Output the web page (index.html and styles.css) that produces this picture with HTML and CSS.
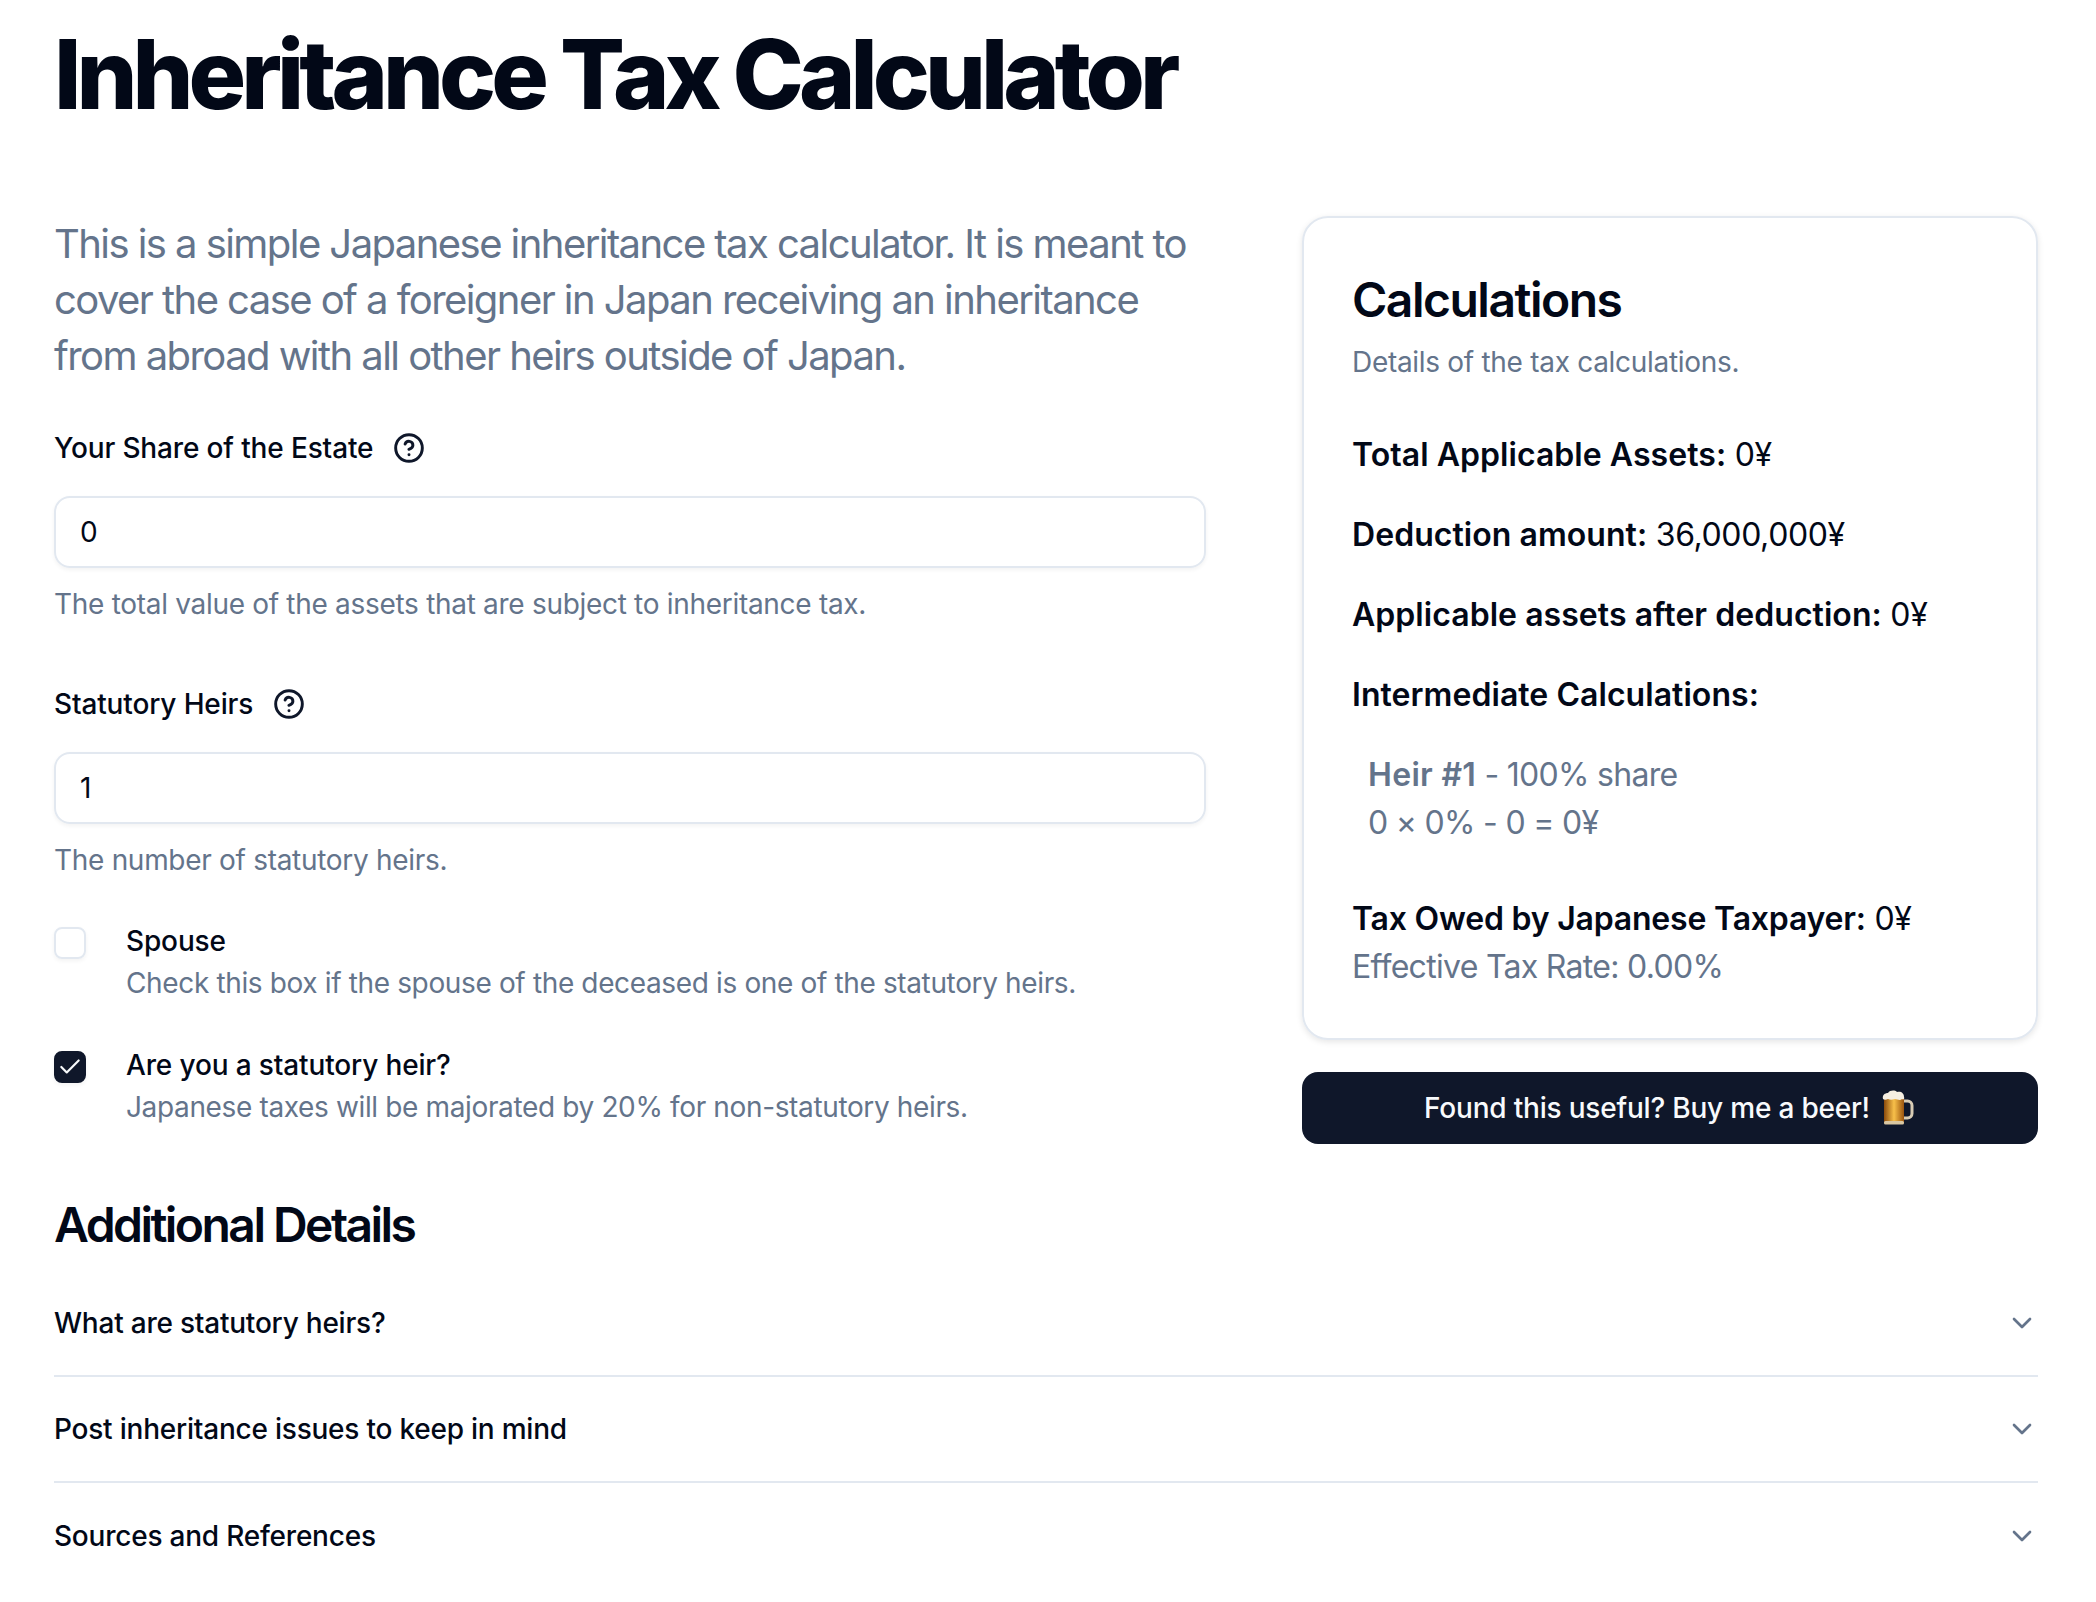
FILE: index.html
```html
<!DOCTYPE html>
<html lang="en">
<head>
<meta charset="utf-8">
<title>Inheritance Tax Calculator</title>
<link rel="stylesheet" href="styles.css">
</head>
<body>
<main class="page">
  <h1 class="title">Inheritance Tax Calculator</h1>
  <div class="columns">
    <section class="form">
      <p class="intro">This is a simple Japanese inheritance tax calculator. It is meant to cover the case of a foreigner in Japan receiving an inheritance from abroad with all other heirs outside of Japan.</p>
      <div class="field">
        <div class="label-row">
          <label class="label">Your Share of the Estate</label>
          <svg class="help" viewBox="0 0 24 24" fill="none" stroke="currentColor" stroke-width="2.2" stroke-linecap="round" stroke-linejoin="round"><circle cx="12" cy="12" r="10"/><path d="M9.09 9a3 3 0 0 1 5.83 1c0 2-3 3-3 3"/><path d="M12 17h.01"/></svg>
        </div>
        <div class="input">0</div>
        <p class="hint">The total value of the assets that are subject to inheritance tax.</p>
      </div>
      <div class="field">
        <div class="label-row">
          <label class="label">Statutory Heirs</label>
          <svg class="help" viewBox="0 0 24 24" fill="none" stroke="currentColor" stroke-width="2.2" stroke-linecap="round" stroke-linejoin="round"><circle cx="12" cy="12" r="10"/><path d="M9.09 9a3 3 0 0 1 5.83 1c0 2-3 3-3 3"/><path d="M12 17h.01"/></svg>
        </div>
        <div class="input">1</div>
        <p class="hint">The number of statutory heirs.</p>
      </div>
      <div class="check-row check-first">
        <span class="box"></span>
        <div>
          <div class="label">Spouse</div>
          <p class="hint check-hint">Check this box if the spouse of the deceased is one of the statutory heirs.</p>
        </div>
      </div>
      <div class="check-row">
        <span class="box box-on">
          <svg viewBox="0 0 24 24" fill="none" stroke="#f8fafc" stroke-width="2" stroke-linecap="round" stroke-linejoin="round"><path d="M20 6 9 17l-5-5"/></svg>
        </span>
        <div>
          <div class="label">Are you a statutory heir?</div>
          <p class="hint check-hint">Japanese taxes will be majorated by 20% for non-statutory heirs.</p>
        </div>
      </div>
    </section>
    <aside class="side">
      <div class="card">
        <h2 class="card-title">Calculations</h2>
        <p class="hint card-sub">Details of the tax calculations.</p>
        <p class="line"><b>Total Applicable Assets:</b> 0¥</p>
        <p class="line"><b>Deduction amount:</b> 36,000,000¥</p>
        <p class="line"><b>Applicable assets after deduction:</b> 0¥</p>
        <p class="line"><b>Intermediate Calculations:</b></p>
        <div class="heir">
          <div><b>Heir #1</b> - 100% share</div>
          <div>0 × 0% - 0 = 0¥</div>
        </div>
        <p class="line line-tax"><b>Tax Owed by Japanese Taxpayer:</b> 0¥</p>
        <p class="rate">Effective Tax Rate: 0.00%</p>
      </div>
      <a class="beer">Found this useful? Buy me a beer!
        <svg class="mug" viewBox="0 0 32 36">
          <defs>
            <linearGradient id="ale" x1="0" x2="1" y1="0" y2="0">
              <stop offset="0" stop-color="#8a4a0c"/><stop offset=".5" stop-color="#f8c04a"/><stop offset="1" stop-color="#9a540e"/>
            </linearGradient>
          </defs>
          <path d="M21 11h4.500a4.500 4.500 0 0 1 4.500 4.500v8a4.500 4.500 0 0 1-4.500 4.500H21" fill="none" stroke="#d8ccb4" stroke-width="3"/>
          <rect x="2" y="7" width="20" height="27" rx="2.500" fill="url(#ale)"/>
          <rect x="2" y="31" width="20" height="3.500" rx="1.500" fill="#d9c7a2"/>
          <path d="M1 9c-1-4 2-6 5-6 2-3 7-3 9-1 4-1 7 1 7 5 1 2-1 3-2 2-2 2-5 0-7 0-3 1-5 1-7 0-2 1-4 1-5 0z" fill="#f6efe2"/>
        </svg>
      </a>
    </aside>
  </div>
  <h2 class="details">Additional Details</h2>
  <div class="accordion">
    <div class="acc-row"><span>What are statutory heirs?</span><svg class="chev" viewBox="0 0 24 24" fill="none" stroke="currentColor" stroke-width="2" stroke-linecap="round" stroke-linejoin="round"><path d="m6 9 6 6 6-6"/></svg></div>
    <div class="acc-row"><span>Post inheritance issues to keep in mind</span><svg class="chev" viewBox="0 0 24 24" fill="none" stroke="currentColor" stroke-width="2" stroke-linecap="round" stroke-linejoin="round"><path d="m6 9 6 6 6-6"/></svg></div>
    <div class="acc-row"><span>Sources and References</span><svg class="chev" viewBox="0 0 24 24" fill="none" stroke="currentColor" stroke-width="2" stroke-linecap="round" stroke-linejoin="round"><path d="m6 9 6 6 6-6"/></svg></div>
  </div>
</main>
</body>
</html>
```
FILE: styles.css
```css
* { box-sizing: border-box; }
html, body { margin: 0; background: #fff; overflow: hidden; }
body { font-family: Inter, "Liberation Sans", sans-serif; color: #020817; }
p, h1, h2 { margin: 0; }
.page { width: 2096px; height: 1602px; padding: 0 58px 0 54px; overflow: hidden; }
.title { font-size: 96px; line-height: 96px; font-weight: 800; letter-spacing: -4.95px; padding-top: 26px; height: 216px; }
.columns { display: grid; grid-template-columns: 1152px 736px; column-gap: 96px; }
.intro { font-size: 40px; line-height: 56px; color: #64748b; letter-spacing: -1.56px; }
.field { margin-top: 44px; }
.field + .field { margin-top: 60px; }
.label-row { display: flex; align-items: center; gap: 20px; height: 40px; }
.label { font-size: 28px; line-height: 40px; font-weight: 500; letter-spacing: -0.14px; }
.help { width: 32px; height: 32px; color: #0f172a; }
.input { height: 72px; margin-top: 28px; padding: 0 24px; border: 2px solid #e2e8f0; border-radius: 16px; font-size: 28px; line-height: 68px; box-shadow: 0 2px 4px rgba(0,0,0,.05); }
.hint { font-size: 28px; line-height: 40px; color: #64748b; letter-spacing: -0.3px; }
.field .hint { margin-top: 16px; }
.check-row { display: flex; gap: 40px; margin-top: 42px; }
.check-first { margin-top: 41px; }
.box { flex: none; width: 32px; height: 32px; margin-top: 6px; border: 2px solid #e2e8f0; border-radius: 8px; box-shadow: 0 2px 4px rgba(0,0,0,.05); }
.box-on { background: #0f172a; border-color: #0f172a; display: flex; align-items: center; justify-content: center; }
.box-on svg { width: 26px; height: 26px; }
.check-row .check-hint { margin-top: 2px; letter-spacing: -0.36px; }
.card { height: 824px; padding: 54px 48px; border: 2px solid #e2e8f0; border-radius: 26px; box-shadow: 0 2px 6px rgba(0,0,0,.1); font-size: 32px; }
.card-title { font-size: 48px; line-height: 56px; font-weight: 600; letter-spacing: -1.5px; }
.card-sub { margin-top: 14px; }
.line { font-size: 32px; line-height: 48px; margin-top: 32px; letter-spacing: -0.4px; }
.card-sub + .line { margin-top: 49px; }
.line b { font-weight: 600; letter-spacing: 0.05px; }
.heir b { font-weight: 600; letter-spacing: 0.3px; }
.heir { margin-top: 32px; padding-left: 16px; color: #64748b; font-size: 32px; line-height: 48px; letter-spacing: -0.7px; }
.line-tax { margin-top: 48px; }
.line-tax b { letter-spacing: -0.2px; }
.rate { color: #64748b; font-size: 32px; line-height: 48px; letter-spacing: -0.7px; }
.beer { display: flex; align-items: center; justify-content: center; gap: 12px; height: 72px; margin-top: 32px; padding-right: 2px; background: #0f172a; color: #f8fafc; border-radius: 16px; font-size: 28px; font-weight: 500; letter-spacing: -0.2px; }
.mug { width: 32px; height: 36px; }
.details { font-size: 48px; line-height: 48px; font-weight: 600; letter-spacing: -2.55px; margin-top: 57px; }
.accordion { margin-top: 22px; }
.acc-row { display: flex; justify-content: space-between; align-items: center; height: 106px; border-bottom: 2px solid #e2e8f0; font-size: 28px; font-weight: 500; letter-spacing: -0.22px; }
.acc-row:last-child { border-bottom: 0; }
.chev { width: 32px; height: 32px; color: #64748b; }
```
